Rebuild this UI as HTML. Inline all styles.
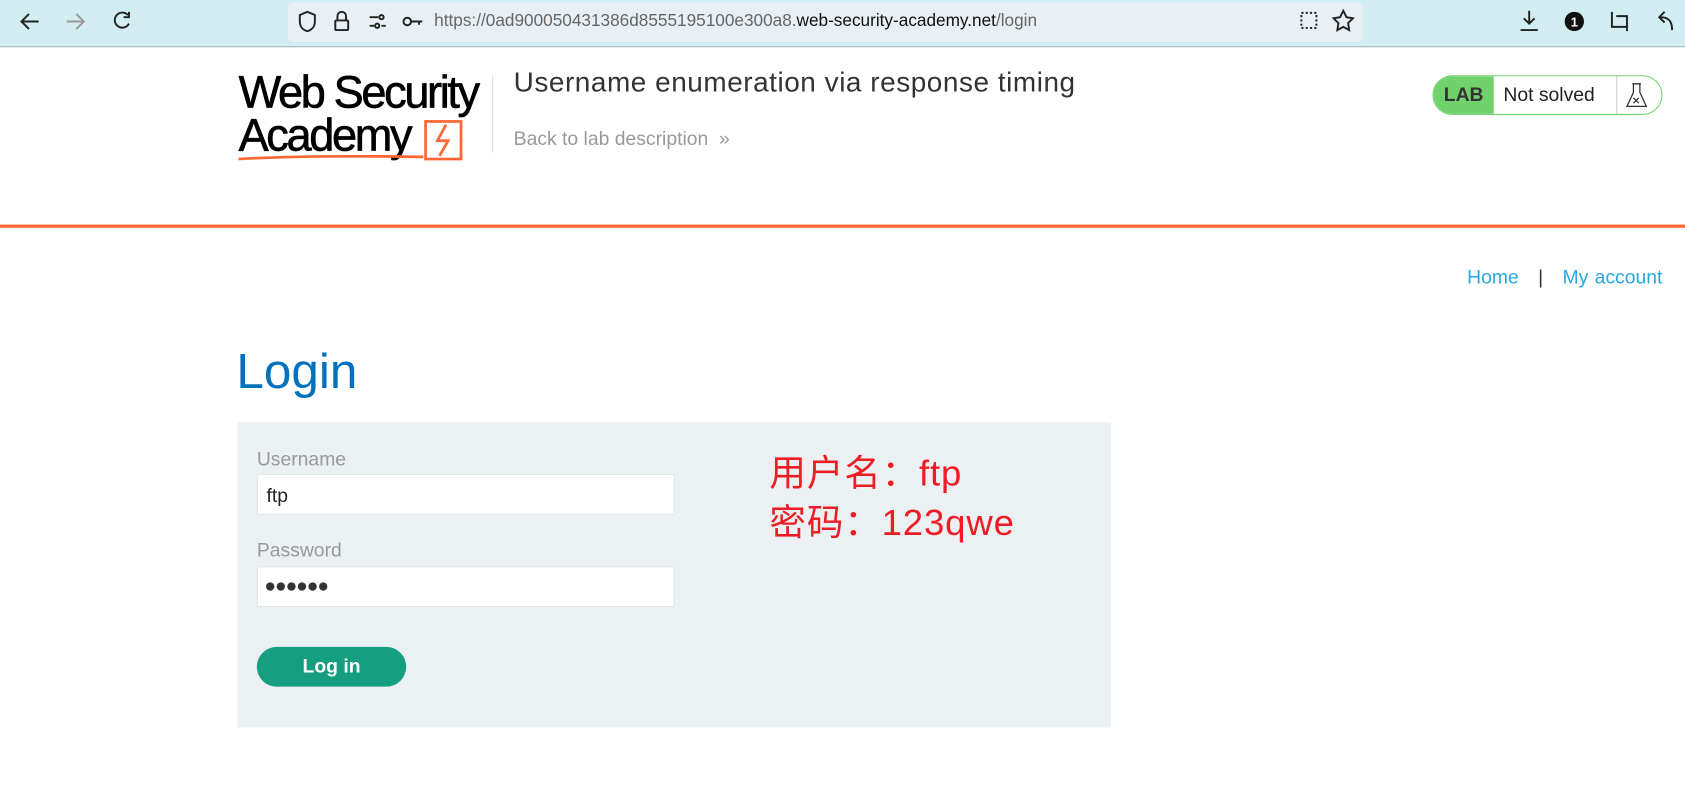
<!DOCTYPE html>
<html><head><meta charset="utf-8"><style>
html,body{margin:0;padding:0;width:1685px;height:789px;overflow:hidden;background:#fff}
#w{position:absolute;left:0;top:0;width:1568px;height:734px;transform:scale(1.07462);transform-origin:0 0;font-family:"Liberation Sans",Arial,sans-serif}
.a{position:absolute}
</style></head><body><div id="w">
<div class="a" style="left:0;top:0;width:1568px;height:43px;background:#d3eef3;border-bottom:1px solid #a9b9bd"></div>
<div class="a" style="left:268px;top:2px;width:1000px;height:37px;background:#e8f0f5;border-radius:5px"></div>
<svg class="a" style="left:0;top:0" width="1568" height="43" fill="none" stroke="#222" stroke-width="1.8">
<path d="M36 20H20M27 13l-7 7 7 7"/>
<path d="M78 20H62M71 13l7 7-7 7" stroke="#999"/>
<path d="M119 14a7 7 0 1 0 1 8M120 11v5h-5"/>
<path d="M286 11l7 3v6c0 5-3 8-7 9-4-1-7-4-7-9v-6z"/>
<rect x="312" y="19" width="12" height="9" rx="1"/><path d="M314 19v-4a4 4 0 0 1 8 0v4"/>
<path d="M344 16h8M344 24h4M355 24h4"/><circle cx="355" cy="16" r="2"/><circle cx="351" cy="24" r="2"/>
<circle cx="379" cy="20" r="3.5"/><path d="M383 20h10M390 20v3"/>
<rect x="1211" y="12" width="14" height="14" stroke-dasharray="2 2"/>
<path d="M1250 10l3 6 6 1-4.5 4.5 1 6.5-5.5-3-5.5 3 1-6.5-4.5-4.5 6-1z"/>
<path d="M1423 10v12M1418 17l5 5 5-5M1415 28h16"/>
<path d="M1500 11v14h14M1504 15h10v14"/>
<path d="M1556 28c0-8-3-12-11-12M1549 11l-5 5 5 5"/>
</svg>
<svg class="a" style="left:1456px;top:11px" width="18" height="18"><circle cx="9" cy="9" r="9" fill="#111"/><text x="9" y="13.5" fill="#fff" font-size="12" font-weight="bold" text-anchor="middle" font-family="Liberation Sans">1</text></svg>
<div class="a" style="left:404px;top:11px;font-size:16px;color:#666;white-space:nowrap">https://0ad900050431386d8555195100e300a8.<span style="color:#111">web-security-academy.net</span>/login</div>

<div class="a" style="left:222px;top:66px;font-size:42px;letter-spacing:-2.2px;line-height:40px;color:#000;-webkit-text-stroke:0.6px #000">Web Security<br>Academy</div>
<svg class="a" style="left:220px;top:108px" width="215" height="45" fill="none" stroke="#ff6633" stroke-width="2.5"><rect x="176" y="5" width="33" height="35"/><path d="M195 8l-8 15h10l-8 14"/><path d="M2 40c50 -3 110 -3 172 -2"/></svg>
<div class="a" style="left:458px;top:70px;width:1px;height:72px;background:#ddd"></div>
<div class="a" style="left:478px;top:61px;font-size:26px;letter-spacing:0.5px;color:#333;white-space:nowrap">Username enumeration via response timing</div>
<div class="a" style="left:478px;top:119px;font-size:18px;color:#999">Back to lab description &nbsp;»</div>
<div class="a" style="left:1333px;top:70px;width:212px;height:35px;border:1px solid #70d16d;border-radius:19px;overflow:hidden;background:#fff">
<div class="a" style="left:0;top:0;width:56px;height:35px;background:#70d16d;color:#333;font-weight:bold;font-size:18px;line-height:35px;text-align:center">LAB</div>
<div class="a" style="left:65px;top:0;font-size:18px;line-height:35px;color:#222">Not solved</div>
<div class="a" style="left:170px;top:0;width:1px;height:35px;background:#ccc"></div>
<svg class="a" style="left:175px;top:4px" width="28" height="28" fill="none" stroke="#333" stroke-width="1.2"><path d="M10 3h8M11 3v8l-6 13h18l-6-13V3M11 16l5 5M16 16l-5 5"/></svg>
</div>
<div class="a" style="left:0;top:209px;width:1568px;height:3px;background:#ff6633"></div>
<div class="a" style="right:21px;top:248px;font-size:18px;color:#29a7e1;word-spacing:1px">Home &nbsp;&nbsp;<span style="color:#333">|</span>&nbsp;&nbsp; My account</div>
<div class="a" style="left:220px;top:318px;font-size:46px;color:#0071bc">Login</div>
<div class="a" style="left:221px;top:393px;width:813px;height:284px;background:#ebf0f2"></div>
<div class="a" style="left:239px;top:417px;font-size:18px;color:#999">Username</div>
<div class="a" style="left:239px;top:441px;width:387px;height:36px;background:#fff;border:1px solid #e0e4e6"></div>
<div class="a" style="left:248px;top:451px;font-size:18px;color:#222">ftp</div>
<div class="a" style="left:239px;top:502px;font-size:18px;color:#999">Password</div>
<div class="a" style="left:239px;top:527px;width:387px;height:36px;background:#fff;border:1px solid #e0e4e6"></div>
<div class="a" style="left:246px;top:535px;font-size:18px;color:#333;letter-spacing:-1px">●●●●●●</div>
<div class="a" style="left:239px;top:602px;width:139px;height:37px;background:#159e80;border-radius:19px;color:#fff;font-weight:bold;font-size:18px;line-height:37px;text-align:center">Log in</div>
<div class="a" style="left:716px;top:418px;font-size:34px;line-height:46px;color:#ee1c25;font-family:'Liberation Sans','Noto Sans CJK SC',sans-serif;letter-spacing:0.8px">用户名：ftp<br>密码：123qwe</div>
</div></body></html>
